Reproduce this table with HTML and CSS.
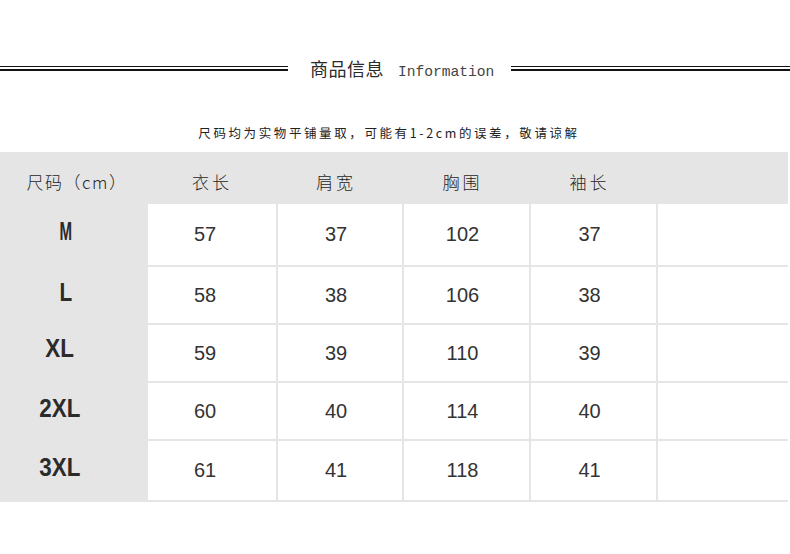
FILE: index.html
```html
<!DOCTYPE html>
<html lang="zh">
<head>
<meta charset="utf-8">
<title>商品信息</title>
<link rel="stylesheet" href="styles.css">
</head>
<body>
<div class="page">
  <div class="title-row">
    <div class="rule rule-left"></div>
    <div class="title"><span class="title-cn">商品信息</span><span class="title-en">Information</span></div>
    <div class="rule rule-right"></div>
  </div>
  <p class="note">尺码均为实物平铺量取，可能有1-2cm的误差，敬请谅解</p>
  <div class="size-table">
    <div class="th th-first">尺码（cm）</div>
    <div class="th">衣长</div>
    <div class="th">肩宽</div>
    <div class="th">胸围</div>
    <div class="th">袖长</div>
    <div class="th"></div>

    <div class="size"><span class="size-m">M</span></div>
    <div class="cell">57</div><div class="cell">37</div><div class="cell">102</div><div class="cell">37</div><div class="cell"></div>

    <div class="size"><span class="size-l">L</span></div>
    <div class="cell">58</div><div class="cell">38</div><div class="cell">106</div><div class="cell">38</div><div class="cell"></div>

    <div class="size size-xl"><span>XL</span></div>
    <div class="cell">59</div><div class="cell">39</div><div class="cell">110</div><div class="cell">39</div><div class="cell"></div>

    <div class="size"><span>2XL</span></div>
    <div class="cell">60</div><div class="cell">40</div><div class="cell">114</div><div class="cell">40</div><div class="cell"></div>

    <div class="size"><span>3XL</span></div>
    <div class="cell">61</div><div class="cell">41</div><div class="cell">118</div><div class="cell">41</div><div class="cell"></div>
  </div>
</div>
</body>
</html>
```

FILE: styles.css
```css
* { box-sizing: border-box; }

html, body {
  margin: 0;
  padding: 0;
  background: #ffffff;
}

body {
  font-family: "Noto Sans CJK SC", "Liberation Sans", sans-serif;
  color: #333333;
}

.page {
  width: 790px;
  padding-top: 50px;
}

.title-row {
  display: flex;
  align-items: center;
  height: 36px;
}

.rule {
  flex: 1 1 0;
  height: 5px;
  border-top: 1px solid #111111;
  border-bottom: 2px solid #111111;
}

.rule-left { flex-basis: 288px; flex-grow: 0; }

.title {
  display: flex;
  align-items: baseline;
  margin: 0 17px 0 22px;
  white-space: nowrap;
}

.title-cn {
  font-size: 18px;
  font-weight: 400;
  color: #2a2a2a;
  letter-spacing: 0.5px;
}

.title-en {
  margin-left: 14px;
  font-family: "Liberation Mono", "DejaVu Sans Mono", monospace;
  font-size: 14.6px;
  color: #444444;
}

.note {
  margin: 37px 0 9px;
  height: 20px;
  line-height: 20px;
  text-align: center;
  font-size: 12.5px;
  letter-spacing: 2.6px;
  color: #222222;
  padding-right: 12px;
}

.size-table {
  width: 788px;
  display: grid;
  grid-template-columns: 146px 128px 124px 125px 125px 1fr;
  grid-template-rows: 50px 61px 56px 56px 56px 59px;
  gap: 2px;
  padding-bottom: 2px;
  background: #e5e5e5;
}

.th {
  display: flex;
  align-items: center;
  justify-content: center;
  padding-top: 8px;
  padding-right: 8px;
  font-size: 17px;
  font-weight: 300;
  letter-spacing: 3px;
  color: #262626;
}

.th:nth-child(2) { padding-left: 4px; padding-right: 4px; }

.th-first {
  letter-spacing: 1.5px;
  padding-left: 8px;
  padding-right: 0;
}

.size {
  display: flex;
  align-items: center;
  justify-content: center;
  padding-right: 26px;
  padding-bottom: 6px;
  font-family: "Liberation Sans", Arial, sans-serif;
  font-weight: 700;
  font-size: 26px;
  color: #2b2b2b;
}

.size span {
  display: inline-block;
  transform: scaleX(0.86);
}

.size .size-m { transform: scaleX(0.58); margin-left: 12px; }
.size .size-l { transform: scaleX(0.8); margin-left: 12px; }
.size-xl { padding-bottom: 10px; }

.cell {
  display: flex;
  align-items: center;
  justify-content: center;
  padding-right: 8px;
  background: #ffffff;
  font-family: "Liberation Sans", Arial, sans-serif;
  font-size: 20px;
  color: #333333;
}

.cell:nth-child(6n+2) { padding-right: 14px; }
```
